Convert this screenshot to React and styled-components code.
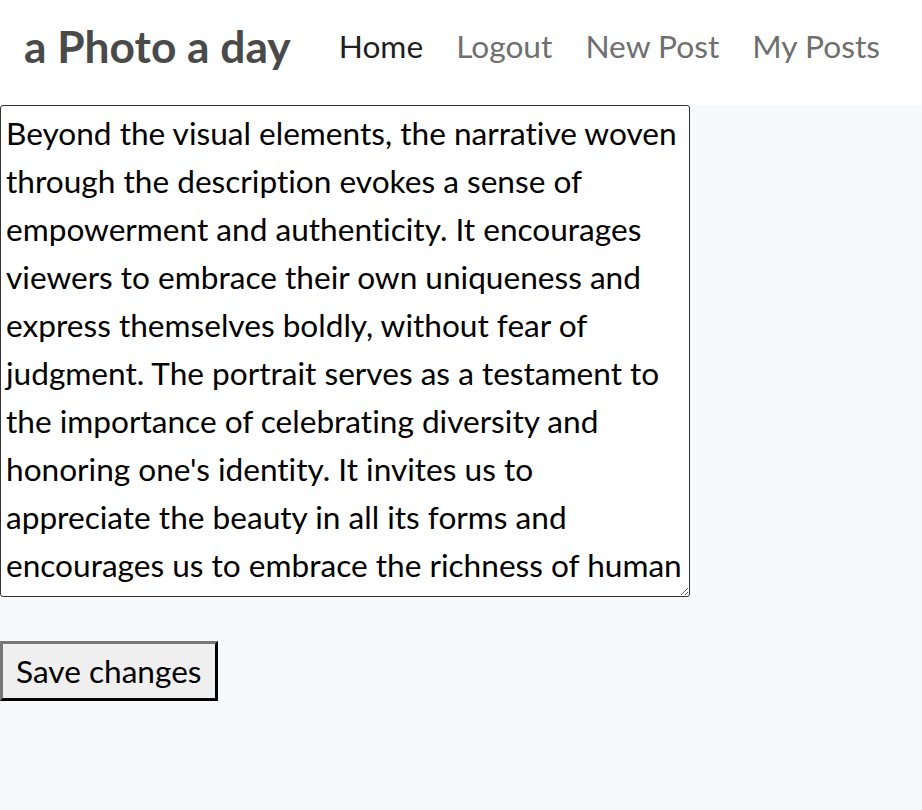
import React, { useState } from 'react';
import styled, { createGlobalStyle } from 'styled-components';

const GlobalStyle = createGlobalStyle`
  html, body {
    margin: 0;
    padding: 0;
    background-color: #f8f9fa;
    font-family: Lato, "Open Sans", sans-serif;
    font-variant-ligatures: none;
  }
`;

const StyledHeader = styled.nav`
  display: flex;
  align-items: center;
  box-sizing: border-box;
  height: 105px;
  padding: 0 24px 14px;
  background-color: #ffffff;
  column-gap: 48px;
`;

const StyledBrand = styled.a`
  font-size: 44.3px;
  font-weight: 700;
  color: #4a4a4a;
  text-decoration: none;
`;

const StyledNav = styled.ul`
  display: flex;
  align-items: center;
  column-gap: 33px;
  margin: 0;
  padding: 0;
  list-style: none;
`;

const StyledNavLink = styled.a`
  font-size: 31.7px;
  color: ${({ active }) => (active ? '#1f1f1f' : '#6f6f6f')};
  text-decoration: none;
`;

const StyledForm = styled.form`
  display: flex;
  flex-direction: column;
  align-items: flex-start;
  row-gap: 44px;
`;

const StyledTextarea = styled.textarea`
  display: block;
  width: 690px;
  height: 492px;
  box-sizing: border-box;
  margin: 0;
  padding: 3px 5px 2px 5px;
  font-family: Lato, "Open Sans", sans-serif;
  font-size: 31.6px;
  line-height: 48px;
  font-variant-ligatures: none;
  color: #000;
  background: #fff;
  border: 1px solid #333;
  border-radius: 3px;
  overflow: hidden;
  resize: both;
`;

const StyledButton = styled.button`
  font-family: Lato, "Open Sans", sans-serif;
  font-size: 31.6px;
  height: 60px;
  padding: 0 13px;
  margin: 0;
  color: #000;
  background-color: #efefef;
  border: 3px outset #777;
  border-right-color: #333;
  border-bottom-color: #333;
`;

const links = ['Home', 'Logout', 'New Post', 'My Posts'];

const initialText =
  "Beyond the visual elements, the narrative woven through the description evokes a sense of empowerment and authenticity. It encourages viewers to embrace their own uniqueness and express themselves boldly, without fear of judgment. The portrait serves as a testament to the importance of celebrating diversity and honoring one's identity. It invites us to appreciate the beauty in all its forms and encourages us to embrace the richness of human diversity.";

const App = () => {
  const [text, setText] = useState(initialText);

  return (
    <>
      <GlobalStyle />
      <StyledHeader>
        <StyledBrand href="#">a Photo a day</StyledBrand>
        <StyledNav>
          {links.map((link) => (
            <li key={link}>
              <StyledNavLink href="#" active={link === 'Home' ? 1 : 0}>
                {link}
              </StyledNavLink>
            </li>
          ))}
        </StyledNav>
      </StyledHeader>
      <StyledForm onSubmit={(ev) => ev.preventDefault()}>
        <StyledTextarea value={text} onChange={(ev) => setText(ev.target.value)} />
        <StyledButton type="submit">Save changes</StyledButton>
      </StyledForm>
    </>
  );
};

export default App;
